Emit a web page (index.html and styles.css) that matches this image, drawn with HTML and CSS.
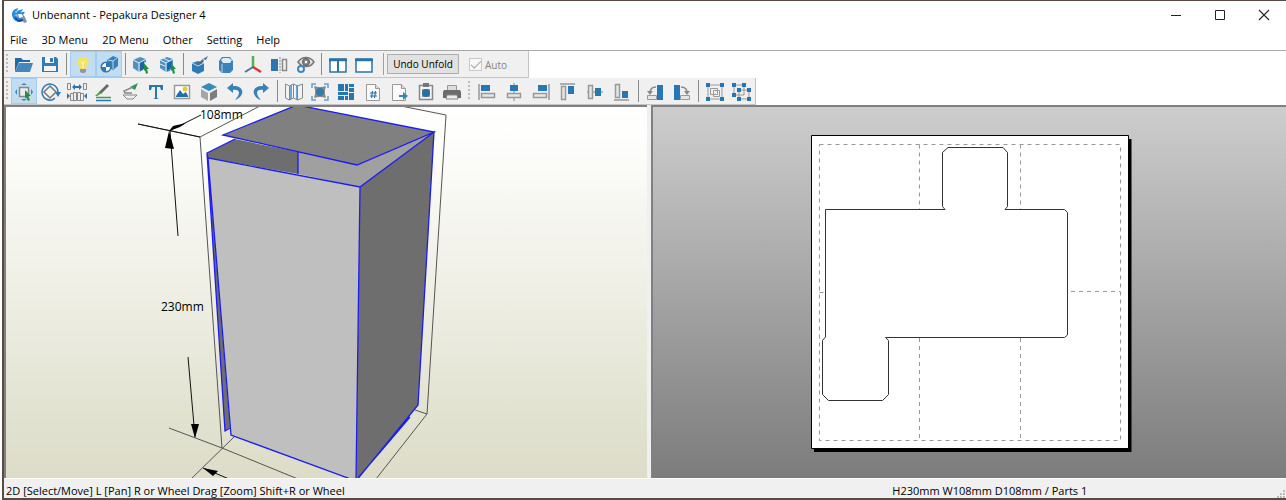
FILE: index.html
```html
<!DOCTYPE html>
<html lang="en">
<head>
    <meta charset="UTF-8">
    <meta name="viewport" content="width=device-width, initial-scale=1.0">
    <title>Unbenannt - Pepakura Designer 4</title>
    <link rel="stylesheet" href="styles.css">
</head>
<body>
    <div class="window">
        <header class="titlebar">
            <svg class="app-icon" width="17" height="17" viewBox="0 0 17 17">
                <path d="M1 7C1 4 3 2 7 1L6 4L12 2L10 5L14 5L12 8L14 10L11 11L13 14L8 15C4 15 1 11 1 7z" fill="#2a86d8"/>
                <path d="M3 5L7 3L6 6zM9 5L12 3L11 6zM3 8L6 7L7 10z" fill="#8accf7"/>
                <path d="M7 7L11 7L12 10L8 11z" fill="#fff"/>
                <path d="M10 11L14 10L16 15L13 16z" fill="#7d93ad"/>
                <path d="M4 11L8 14L12 13" fill="none" stroke="#123f80" stroke-width="1.5"/>
            </svg>
            <h1 class="title">Unbenannt - Pepakura Designer 4</h1>
            <div class="window-buttons">
                <button type="button" aria-label="Minimize"><svg width="12" height="12"><path d="M1 6.500h10" stroke="#222"/></svg></button>
                <button type="button" aria-label="Maximize"><svg width="12" height="12"><path d="M1.500 1.500h9v9h-9z" fill="none" stroke="#222"/></svg></button>
                <button type="button" aria-label="Close"><svg width="12" height="12"><path d="M1 1l10 10M11 1L1 11" stroke="#222" stroke-width="1.100"/></svg></button>
            </div>
        </header>

        <nav class="menubar">
            <button type="button">File</button>
            <button type="button">3D Menu</button>
            <button type="button">2D Menu</button>
            <button type="button">Other</button>
            <button type="button">Setting</button>
            <button type="button">Help</button>
        </nav>

        <div class="toolbar-row">
            <div class="toolbar toolbar-main">
                <span class="grip"></span>
                <button type="button" aria-label="Open"><svg viewBox="0 0 22 22"><path d="M2 18V4h6l2 2h7v2H6z" fill="#1f6ba8"/><path d="M6 9h14l-3 9H2z" fill="#4487bd"/></svg></button>
                <button type="button" aria-label="Save"><svg viewBox="0 0 22 22"><path d="M3 3h14l2 2v13H3z" fill="#2f7cb8"/><path d="M6 3h9v6H6z" fill="#f4f4f4"/><path d="M11 4h3v4h-3z" fill="#2f7cb8"/><path d="M5 12h12v5H5z" fill="#f4f4f4"/></svg></button>
                <span class="separator"></span>
                <button type="button" class="active" aria-label="Light"><svg viewBox="0 0 22 22"><path d="M11 3c-7 0-7 7-3 10v2h6v-2c4-3 4-10-3-10z" fill="#f5e45f"/><path d="M9 7l2 3 2-3M11 10v4" fill="none" stroke="#fffbd0"/><path d="M8 15h6v3l-2 1h-2l-2-1z" fill="#929ba3"/></svg></button>
                <button type="button" class="active" aria-label="Texture"><svg viewBox="0 0 22 22"><path d="M9 6l6-4 5 2v8l-5 4-5-3z" fill="#387fb9"/><path d="M10 6l5 1 4-3M15 7v8" fill="none" stroke="#b9d6ec"/><circle cx="8" cy="13" r="5.500" fill="#3477ac"/><path d="M8 9v4H4c0-2 2-4 4-4zM8 13h4c0 3-2 4-4 4z" fill="#fff"/></svg></button>
                <span class="separator"></span>
                <button type="button" aria-label="Select face"><svg viewBox="0 0 22 22"><path d="M3 6l7-3 6 2v3l-3 1v7l-4 2-6-4z" fill="#4e92c4"/><path d="M3 6l6 3 7-4M9 9v9" fill="none" stroke="#e2eef6"/><path d="M10 9l4-2v8l-4 2z" fill="#1c669f"/><path d="M14 9l5 6h-2l1 4-2 1-1-4-1 1z" fill="#219044"/></svg></button>
                <button type="button" aria-label="Select part"><svg viewBox="0 0 22 22"><path d="M3 6l7-3 6 2v6l-3 6-4 1-6-4z" fill="#4e92c4"/><path d="M3 6l6 3 7-4M9 9v9M3 10l5 2M6 4l6 3" fill="none" stroke="#e2eef6"/><path d="M10 9l5-2v6l-5 4z" fill="#1c669f"/><path d="M14 9l5 6h-2l1 4-2 1-1-4-1 1z" fill="#219044"/></svg></button>
                <span class="separator"></span>
                <button type="button" aria-label="Edge color"><svg viewBox="0 0 22 22"><path d="M3 9l6-2 6 2v8l-6 3-6-3z" fill="#2f7bb5"/><path d="M3 9l6 3 6-3" fill="none" stroke="#bfdaed"/><path d="M8 10l6-5 1 2-5 4z" fill="#5d6770"/><path d="M14 5l5-3-2 4z" fill="#3b78a5"/></svg></button>
                <button type="button" aria-label="Solid"><svg viewBox="0 0 22 22"><path d="M4 7l3-4h8l3 4v9l-3 3H7l-3-3z" fill="#3a82b8"/><path d="M6 6l2-2h6l3 2-2 3H8z" fill="#dfebf5"/><path d="M7 10v9" stroke="#79acd4" stroke-width="2"/></svg></button>
                <button type="button" aria-label="Axes"><svg viewBox="0 0 22 22"><path d="M11 2v11" stroke="#53b254" stroke-width="2.500"/><path d="M11 13l-8 5" stroke="#43759f" stroke-width="2"/><path d="M11 13l8 5" stroke="#d83535" stroke-width="2.500"/></svg></button>
                <button type="button" aria-label="Mirror"><svg viewBox="0 0 22 22"><path d="M3 5h7v12H3z" fill="#2b76b2"/><path d="M12 3v16" stroke="#888" stroke-dasharray="2 1"/><path d="M14.500 5.500h4v11h-4z" fill="#f2f2f2" stroke="#888" stroke-width="1.500"/></svg></button>
                <button type="button" aria-label="Find edge"><svg viewBox="0 0 22 22"><path d="M4 8c4-6 12-6 16 0-4 6-12 6-16 0z" fill="#e2e2e2" stroke="#777" stroke-width="1.500"/><circle cx="12" cy="8" r="3.500" fill="#888" stroke="#555"/><circle cx="12" cy="8" r="1.200" fill="#fff"/><circle cx="7" cy="15" r="3" fill="#eef5fa" stroke="#3f86bd" stroke-width="2"/></svg></button>
                <span class="separator"></span>
                <button type="button" aria-label="Two panes"><svg viewBox="0 0 22 22"><path d="M3 5h16v13H3z" fill="#fff" stroke="#2b72a8" stroke-width="1.500"/><path d="M2 6h18" stroke="#2b72a8" stroke-width="2.500"/><path d="M11 5v13" stroke="#2b72a8" stroke-width="2"/></svg></button>
                <button type="button" aria-label="One pane"><svg viewBox="0 0 22 22"><path d="M3 5h16v13H3z" fill="#fff" stroke="#2b72a8" stroke-width="1.500"/><path d="M2 6h18" stroke="#2b72a8" stroke-width="2.500"/></svg></button>
            </div>
            <div class="toolbar toolbar-unfold">
                <span class="divider"></span>
                <button type="button" class="unfold">Undo Unfold</button>
                <label class="auto"><input type="checkbox" checked disabled>Auto</label>
            </div>
        </div>

        <div class="toolbar-row">
            <div class="toolbar toolbar-edit">
                <span class="grip"></span>
                <button type="button" class="active" aria-label="Select and move"><svg viewBox="0 0 22 22"><path d="M6.500 6.500h9v9h-9z" fill="#eee" stroke="#888" stroke-width="1.500"/><path d="M8 4l3-2 3 2zM8 18l3 2 3-2zM4 8l-2 3 2 3zM18 8l2 3-2 3z" fill="#3b86bf"/><path d="M12 9l6 6h-3l2 4-2 1-2-4-1 2z" fill="#219044"/></svg></button>
                <button type="button" aria-label="Rotate"><svg viewBox="0 0 22 22"><path d="M6 18A8 8 0 1 1 18 12" fill="none" stroke="#2d78b2" stroke-width="1.500"/><path d="M15 11h6l-3 5z" fill="#2d78b2"/><path d="M10 5l6 6-6 6-6-6z" fill="#f3f3f3" stroke="#777" stroke-width="1.500"/><path d="M6 18q5 3 9-1" fill="none" stroke="#2d78b2" stroke-width="1.500"/></svg></button>
                <button type="button" aria-label="Join and disjoin"><svg viewBox="0 0 22 22"><path d="M1.500 2.500h3v6h-3zM17.500 2.500h3v6h-3zM4.500 12.500h3v7h-3zM7.500 11.500h3v8h-3zM11.500 11.500h3v8h-3zM14.500 12.500h3v7h-3z" fill="#eee" stroke="#888"/><path d="M6 6l3-3v2h4V3l3 3-3 3V7H9v2z" fill="#2875b2"/><path d="M1 12l3 3-3 3zM21 12l-3 3 3 3z" fill="#2875b2"/></svg></button>
                <button type="button" aria-label="Edge style"><svg viewBox="0 0 22 22"><path d="M7 11L15 3l2 2L9 13z" fill="#6a6a6a"/><path d="M3 15l5-5 2 2-5 3z" fill="#45a742"/><path d="M4 16.500h15" stroke="#40a343" stroke-width="1.500"/><path d="M4 19.500h15" stroke="#2878b2" stroke-width="1.500"/></svg></button>
                <button type="button" aria-label="Flap"><svg viewBox="0 0 22 22"><path d="M11 6l8-4-3 7z" fill="#31934e"/><path d="M14 6l-9 4 1 2h7" fill="none" stroke="#888" stroke-width="1.500"/><path d="M4 14h14l-4 4H8z" fill="#eee" stroke="#888"/></svg></button>
                <button type="button" aria-label="Text"><svg viewBox="0 0 22 22"><path d="M4 4h14v5h-2l-1-3h-3v11l2 1H8l2-1V6H7L6 9H4z" fill="#2877b3"/></svg></button>
                <button type="button" aria-label="Image"><svg viewBox="0 0 22 22"><path d="M3.500 4.500h15v13h-15z" fill="#fff" stroke="#999" stroke-width="1.500"/><path d="M5 15l4-6 3 4 3-2 2 4v1H5z" fill="#236fa9"/><circle cx="14" cy="8" r="2.500" fill="#d9cf37"/></svg></button>
                <button type="button" aria-label="Part from 3D"><svg viewBox="0 0 22 22"><path d="M3 6l8-4 8 4-8 4z" fill="#368abd"/><path d="M3 8l7 4v8l-7-4z" fill="#a5a5a5"/><path d="M19 8l-7 4v8l7-4z" fill="#7d7d7d"/></svg></button>
                <button type="button" aria-label="Undo"><svg viewBox="0 0 22 22"><path d="M9 2L3 7l6 5V9c7-1 8 4 2 10 11-4 9-15-2-14z" fill="#3782b8"/></svg></button>
                <button type="button" aria-label="Redo"><svg viewBox="0 0 22 22"><path d="M13 2l6 5-6 5V9c-7-1-8 4-2 10C0 15 2 4 13 5z" fill="#3782b8"/></svg></button>
                <span class="separator"></span>
                <button type="button" aria-label="Fold map"><svg viewBox="0 0 22 22"><path d="M2.500 3l4 2v14l-4-2zM6.500 5l4-2v14l-4 2zM10.500 3l4 2v14l-4-2zM14.500 5l5-2v14l-5 2z" fill="#f2f2f2" stroke="#888"/><path d="M8 4v14M14 4v14" stroke="#4690c3" stroke-width="1.500"/></svg></button>
                <button type="button" aria-label="Fit parts"><svg viewBox="0 0 22 22"><path d="M3 7V3h4M15 3h4v4M19 15v4h-4M7 19H3v-4" fill="none" stroke="#62a2cf" stroke-width="1.500"/><path d="M5 5l4 1h4l4-1-1 4v4l1 4-4-1H9l-4 1 1-4V9z" fill="#8a8a8a"/><circle cx="11" cy="11" r="4" fill="#347aab"/></svg></button>
                <button type="button" aria-label="Arrange"><svg viewBox="0 0 22 22"><path d="M3 3h6v7H3zM10 3h3v7h-3zM14 3h5v3h-5zM14 7h5v4h-5zM3 11h10v3H3zM3 15h6v4H3zM10 15h3v4h-3zM14 12h5v7h-5z" fill="#2975ad"/></svg></button>
                <button type="button" aria-label="Page number"><svg viewBox="0 0 22 22"><path d="M4.500 3.500h9l4 4v12h-13z" fill="#fafafa" stroke="#999"/><path d="M13.500 3.500v4h4" fill="#ddd" stroke="#999"/><path d="M9.500 17l1-7M12.500 17l1-7M8 12h7M8 15h7" stroke="#2775ae" stroke-width="1.200"/></svg></button>
                <button type="button" aria-label="Export"><svg viewBox="0 0 22 22"><path d="M4.500 3.500h9l4 4v12h-13z" fill="#fafafa" stroke="#999"/><path d="M13.500 3.500v4h4" fill="#ddd" stroke="#999"/><path d="M11 14h4v-3l5 4-5 4v-3h-4z" fill="#3585bb"/></svg></button>
                <button type="button" aria-label="Paste to clipboard"><svg viewBox="0 0 22 22"><path d="M4.500 4.500h13v14h-13z" fill="#f5f5f5" stroke="#888" stroke-width="1.500"/><path d="M8 2h6v4H8z" fill="#777"/><path d="M7 8h8v8H7z" fill="#999"/><circle cx="11" cy="12" r="4" fill="#286fa5"/></svg></button>
                <button type="button" aria-label="Print"><svg viewBox="0 0 22 22"><path d="M6.500 4.500h9v5h-9z" fill="#ddd" stroke="#999"/><path d="M3 9h16l1 2v6H2v-6z" fill="#6c6c6c"/><path d="M6 14h10l1 4H5z" fill="#eee" stroke="#888"/></svg></button>
            </div>
            <div class="toolbar toolbar-align">
                <span class="grip"></span>
                <button type="button" aria-label="Align left"><svg viewBox="0 0 22 22"><path d="M3 3v16" stroke="#999" stroke-width="1.500"/><path d="M5 4h9v6H5z" fill="#2777b4"/><path d="M5.500 12.500h13v4h-13z" fill="#e6e6e6" stroke="#999" stroke-width="1.500"/></svg></button>
                <button type="button" aria-label="Align center"><svg viewBox="0 0 22 22"><path d="M11 2v18" stroke="#888"/><path d="M7 4h8v6H7z" fill="#2777b4"/><path d="M4.500 12.500h13v4h-13z" fill="#e6e6e6" stroke="#999" stroke-width="1.500"/></svg></button>
                <button type="button" aria-label="Align right"><svg viewBox="0 0 22 22"><path d="M19 3v16" stroke="#999" stroke-width="1.500"/><path d="M8 4h9v6H8z" fill="#2777b4"/><path d="M3.500 12.500h13v4h-13z" fill="#e6e6e6" stroke="#999" stroke-width="1.500"/></svg></button>
                <button type="button" aria-label="Align top"><svg viewBox="0 0 22 22"><path d="M3 3h15" stroke="#999" stroke-width="1.500"/><path d="M11 5h6v8h-6z" fill="#2777b4"/><path d="M4.500 5.500h4v13h-4z" fill="#e6e6e6" stroke="#999" stroke-width="1.500"/></svg></button>
                <button type="button" aria-label="Align middle"><svg viewBox="0 0 22 22"><path d="M3 11h16" stroke="#888"/><path d="M11 7h6v8h-6z" fill="#2777b4"/><path d="M4.500 4.500h4v13h-4z" fill="#e6e6e6" stroke="#999" stroke-width="1.500"/></svg></button>
                <button type="button" aria-label="Align bottom"><svg viewBox="0 0 22 22"><path d="M3 19h15" stroke="#999" stroke-width="1.500"/><path d="M11 10h6v7h-6z" fill="#2777b4"/><path d="M4.500 3.500h4v13h-4z" fill="#e6e6e6" stroke="#999" stroke-width="1.500"/></svg></button>
                <span class="separator"></span>
                <button type="button" aria-label="Rotate left"><svg viewBox="0 0 22 22"><path d="M13 4h6v15h-6z" fill="#2777b4"/><path d="M3.500 14.500h9v4h-9z" fill="#e6e6e6" stroke="#999"/><path d="M6 12q0-6 6-6" fill="none" stroke="#888" stroke-width="1.500"/><path d="M3 10h6l-3 4z" fill="#888"/></svg></button>
                <button type="button" aria-label="Rotate right"><svg viewBox="0 0 22 22"><path d="M3 4h6v15H3z" fill="#2777b4"/><path d="M9.500 14.500h9v4h-9z" fill="#e6e6e6" stroke="#999"/><path d="M10 6q6 0 6 6" fill="none" stroke="#888" stroke-width="1.500"/><path d="M13 10h6l-3 4z" fill="#888"/></svg></button>
                <span class="separator"></span>
                <button type="button" aria-label="Group"><svg viewBox="0 0 22 22"><path d="M4 4h14v14H4zM6.500 7.500h7v6h-7zM9.500 9.500h6v6h-6z" fill="none" stroke="#999"/><path d="M2 2h4v4H2zM16 2h4v4h-4zM2 16h4v4H2zM16 16h4v4h-4z" fill="#2475b4"/></svg></button>
                <button type="button" aria-label="Ungroup"><svg viewBox="0 0 22 22"><path d="M3 4h10v10H3zM8 9h10v9H8z" fill="#eee" stroke="#999"/><path d="M1 2h4v4H1zM11 2h4v4h-4zM1 12h4v4H1zM6 7h4v4H6zM16 7h4v4h-4zM6 16h4v4H6zM16 16h4v4h-4z" fill="#2475b4"/></svg></button>
            </div>
        </div>

        <main class="views">
            <section class="view view-3d" aria-label="3D view">
                <svg class="scene">
                    <g transform="translate(-6 -107)">
                        <!-- bounding box and dimension lines -->
                        <path class="box-line" d="M138 124L200 137L260 106M200 137L222 448M401 106L446 115L427 414L376 479M415 410L427 414M169 428L222 448L298 479M234 437L191 479"/>
                        <!-- model -->
                        <path d="M207 153L225 431L230 427L208 158z" fill="#6e6e6e"/>
                        <path d="M207 153L235 139L298 152V174L208 158z" fill="#6e6e6e"/>
                        <path d="M298 152L357 165L434 132L360 187L298 174z" fill="#a0a0a0"/>
                        <path d="M223 135L297 105L434 132L357 165z" fill="#808080"/>
                        <path d="M208 158L360 187L356 481L231 435z" fill="#bfbfbf"/>
                        <path d="M360 187L434 132L418 405L356 481z" fill="#6e6e6e"/>
                        <path class="edge" d="M223 135L297 105L434 132L357 165zM235 139L207 153L208 158L360 187L434 132L418 405L356 481L360 187M298 152V174M207 153L225 431L230 428M208 158L231 435L356 481M410 417L358 478"/>
                        <!-- dimension arrows -->
                        <path class="dim-line" d="M138 124L200 137M170 131L178 236M188 357L195 437M169 131L201 115M203 468L229 479"/>
                        <path d="M169 131L165 148L174 149zM195 438L191 424L199 424zM169 131L173 126L186 123L180 127zM203 468L213 476L218 471z"/>
                        <text x="200" y="119">108mm</text>
                        <text x="161" y="311">230mm</text>
                    </g>
                </svg>
            </section>
            <section class="view view-2d" aria-label="2D view">
                <svg class="paper" width="321" height="317">
                    <path d="M3 4h317.500v313H3z" fill="#000"/>
                    <path d="M.5 .5h317v313H.5z" fill="#fff" stroke="#000"/>
                    <path class="page-line" d="M8.500 9.500h301v296h-301zM108.500 9.500v65M209.500 9.500v65M108.500 203v102M209.500 203v102M8.500 157.500h6M260 156.500h49"/>
                    <path class="part" d="M14.500 74.500H134L131.500 71.500V17.500L137 12.500H192L196.500 17.500V71.500L194 74.500H253.500L256.500 77.500V200L253.500 202.500H74.500L77.500 205.500V259.500L71.500 265.500H17.500L11.500 259.500V205.500L14.500 202z"/>
                </svg>
            </section>
        </main>

        <footer class="statusbar">
            <span class="hint">2D [Select/Move] L [Pan] R or Wheel Drag [Zoom] Shift+R or Wheel</span>
            <span class="size">H230mm W108mm D108mm / Parts 1</span>
            <svg class="resize" width="9" height="9"><path d="M7 1h2v2H7zM4 4h2v2H4zM7 4h2v2H7zM1 7h2v2H1zM4 7h2v2H4zM7 7h2v2H7z" fill="#bbb"/></svg>
        </footer>
    </div>
</body>
</html>
```
FILE: styles.css
```css
* {
    box-sizing: border-box;
}
body {
    margin: 0;
    background: #fff;
    font-family: "Open Sans", "Noto Sans", sans-serif;
    font-size: 11px;
    line-height: 16px;
    color: #000;
}
.window {
    display: flex;
    flex-direction: column;
    height: 100vh;
    margin-left: 2px;
    border: solid #5a4a40;
    border-width: 1px 0 2px 2px;
    background: #fff;
}
button {
    padding: 0;
    border: 0;
    background: none;
    font: inherit;
    color: inherit;
}
.titlebar {
    display: flex;
    align-items: center;
    height: 28px;
    padding-left: 7px;
}
.app-icon {
    margin-right: 4px;
}
.title {
    flex: 1;
    margin: 0;
    font-size: 11px;
    font-weight: normal;
}
.window-buttons {
    display: flex;
}
.window-buttons button {
    display: flex;
    align-items: center;
    justify-content: center;
    width: 44px;
    height: 28px;
}
.menubar {
    display: flex;
    gap: 2px;
    height: 22px;
    padding-top: 1px;
    border-bottom: 1px solid #a8a8a8;
}
.menubar button {
    padding: 0 6px;
}

/* toolbars */
.toolbar-row {
    display: flex;
    height: 27px;
}
.toolbar {
    display: flex;
    align-items: center;
    background: #f0f0f0;
    border-bottom: 1px solid #c4c4c4;
}
.toolbar-main {
    width: 376px;
    padding-right: 3px;
}
.toolbar-edit {
    width: 462px;
    padding-right: 1px;
}
.toolbar-align {
    width: 290px;
    border-right: 1px solid #c4c4c4;
}
.toolbar-unfold {
    width: 149px;
    border-right: 1px solid #c4c4c4;
}
.grip {
    width: 2px;
    height: 20px;
    margin: 0 3px 0 2px;
    background: repeating-linear-gradient(#bdbdbd 0 2px, #f0f0f0 2px 4px);
}
.toolbar > button:not(.unfold) {
    flex: 1;
    display: flex;
    align-items: center;
    justify-content: center;
    height: 26px;
    padding-top: 1px;
}
.toolbar > button.active {
    background: #c2dcf2;
    box-shadow: inset 0 0 0 1px #9fcdf3;
}
.toolbar button svg {
    flex: none;
    width: 22px;
    height: 22px;
}
.separator {
    width: 6px;
    height: 22px;
    background: linear-gradient(#8a8a8a, #8a8a8a) center / 1px 100% no-repeat;
}
.divider {
    width: 4px;
    height: 22px;
    margin-right: 3px;
    border-right: 1px solid #a0a0a0;
}
.unfold {
    width: 72px;
    height: 20px;
    background: #e1e1e1;
    border: 1px solid #adadad;
    font-size: 10px;
}
.auto {
    display: flex;
    align-items: center;
    gap: 3px;
    margin-left: 10px;
    padding-top: 1px;
    font-size: 10px;
    color: #838383;
}
.auto input {
    appearance: none;
    width: 13px;
    height: 13px;
    margin: 0;
    background: #f8f8f8;
    border: 1px solid #c8c8c8;
}
.auto input:checked::after {
    content: "";
    display: block;
    width: 9px;
    height: 4px;
    margin: 2px 1px;
    border: solid #a6a6a6;
    border-width: 0 0 1px 1px;
    transform: rotate(-45deg);
}

/* model and paper views */
.views {
    flex: 1;
    display: flex;
    gap: 4px;
    min-height: 0;
    background: #f0f0f0;
}
.view {
    min-width: 0;
    border: solid #808080;
    border-width: 2px 0 0 2px;
    overflow: hidden;
}
.view-3d {
    flex: 645;
    background: linear-gradient(#fff, #fdfdfb 10%, #dcdcc8);
}
.view-2d {
    flex: 633;
    display: flex;
    align-items: center;
    justify-content: center;
    padding: 2px 0 0 4px;
    background: linear-gradient(#cdcdcd, #7c7c7c);
}
.scene {
    display: block;
    width: 100%;
    height: 100%;
    font-size: 12px;
}
.box-line {
    fill: none;
    stroke: #555;
    stroke-width: 1;
}
.dim-line {
    fill: none;
    stroke: #111;
    stroke-width: 1;
}
.edge {
    fill: none;
    stroke: #1c1cf0;
    stroke-width: 1.3;
}
.paper {
    flex: none;
}
.page-line {
    fill: none;
    stroke: #999;
    stroke-dasharray: 4 4;
}
.part {
    fill: #fff;
    stroke: #333;
}

.statusbar {
    display: flex;
    align-items: center;
    height: 20px;
    padding: 4px 1px 0 2px;
    background: #f0f0f0;
    border-top: 1px solid #fff;
}
.hint {
    flex: 887;
}
.size {
    flex: 384;
}
.resize {
    align-self: flex-end;
}
```
